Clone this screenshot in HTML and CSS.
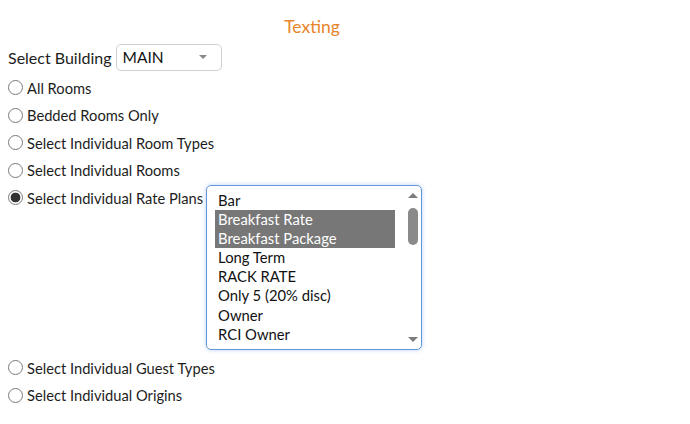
FILE: index.html
```html
<html>
<head>
  <title>Texting</title>
  <link rel="stylesheet" href="styles.css">
</head>
<body>
  <div class="page">
    <div class="title">Texting</div>

    <div class="building">
      <span>Select Building</span>
      <div class="dropdown">
        <span>MAIN</span>
        <span class="caret"></span>
      </div>
    </div>

    <label class="opt"><input type="radio" name="scope"> All Rooms</label>
    <label class="opt"><input type="radio" name="scope"> Bedded Rooms Only</label>
    <label class="opt"><input type="radio" name="scope"> Select Individual Room Types</label>
    <label class="opt"><input type="radio" name="scope"> Select Individual Rooms</label>

    <div class="opt rates">
      <label class="opt"><input type="radio" name="scope" checked> Select Individual Rate Plans</label>
      <div class="listbox">
        <div class="items">
          <div class="item">Bar</div>
          <div class="item sel">Breakfast Rate</div>
          <div class="item sel">Breakfast Package</div>
          <div class="item">Long Term</div>
          <div class="item">RACK RATE</div>
          <div class="item">Only 5 (20% disc)</div>
          <div class="item">Owner</div>
          <div class="item">RCI Owner</div>
        </div>
        <div class="scrollbar">
          <span class="arrow up"></span>
          <span class="thumb"></span>
          <span class="arrow down"></span>
        </div>
      </div>
    </div>

    <label class="opt"><input type="radio" name="scope"> Select Individual Guest Types</label>
    <label class="opt"><input type="radio" name="scope"> Select Individual Origins</label>
  </div>
</body>
</html>
```

FILE: styles.css
```css
body { margin: 8px; font-family: Lato, "Open Sans", sans-serif; color: #1d1d1d; background: #fff; }
.page { width: 608px; }
.title { text-align: center; color: #e8842a; font-size: 17.5px; height: 20px; line-height: 20px;
  margin-top: 9px; }
.building { display: flex; align-items: center; gap: 4px; font-size: 16px; margin-top: 6px; height: 28px;
  margin-bottom: 3px; }
.dropdown { display: flex; align-items: center; justify-content: space-between; width: 84px; height: 25px;
  border: 1px solid #d0d0d0; border-radius: 5px; padding: 0 14px 0 6px; font-size: 15.5px; color: #111; }
.caret { width: 0; height: 0; border-left: 4px solid transparent; border-right: 4px solid transparent;
  border-top: 4px solid #888; }
.opt { display: flex; align-items: center; height: 27.5px; font-size: 14.7px; }
.opt input { appearance: none; -webkit-appearance: none; width: 15px; height: 15px; margin: 0 4px 0 0;
  border: 1px solid #7a7a7a; border-radius: 50%; background: #fff; }
.opt input:checked { background: radial-gradient(circle, #333 0 4.6px, #fff 5.2px); }
.rates { height: 170px; align-items: flex-start; }
.listbox { display: flex; margin-left: 3px; margin-top: 1px; width: 214px; height: 163px;
  border: 1px solid #6596dc; border-radius: 5px; box-shadow: 0 0 4px rgba(102, 150, 230, 0.45); }
.items { width: 180px; padding: 5px 0 0 8px; }
.item { height: 19.1px; line-height: 19px; padding-left: 3px; font-size: 14.8px; color: #111; white-space: nowrap; }
.item.sel { background: #777; color: #fff; }
.scrollbar { position: relative; width: 14px; margin-left: 11px; }
.arrow { position: absolute; left: 2px; width: 0; height: 0; border-left: 5px solid transparent;
  border-right: 5px solid transparent; }
.arrow.up { top: 7px; border-bottom: 5px solid #7d7d7d; }
.arrow.down { bottom: 7px; border-top: 5px solid #7d7d7d; }
.thumb { position: absolute; left: 2px; top: 22px; width: 10px; height: 37px; background: #8a8a8a; border-radius: 5px; }
```
